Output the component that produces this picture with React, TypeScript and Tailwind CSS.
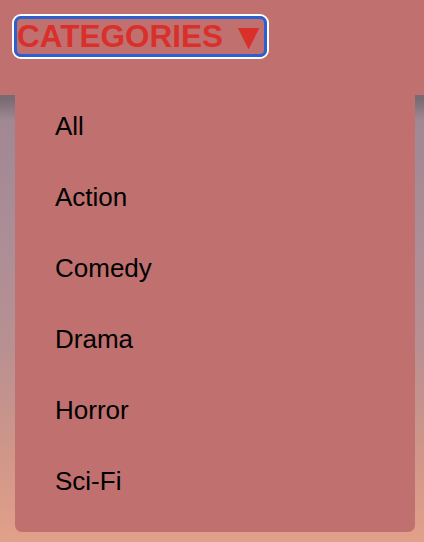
import { useState } from 'react'

const categories = ['All', 'Action', 'Comedy', 'Drama', 'Horror', 'Sci-Fi']

export default function App() {
  const [open, setOpen] = useState(true)
  const [selected, setSelected] = useState('All')

  return (
    <div
      className="relative min-h-screen h-[542px] overflow-hidden bg-[linear-gradient(180deg,#4d474e_0px,#7a6c76_100px,#a08893_120px,#ad8e97_250px,#b99091_350px,#cf9689_450px,#e1a089_542px)]"
      style={{ fontFamily: '"Liberation Sans", Arial, sans-serif' }}
    >
      <header className="h-[95px] bg-[#bf706f] pt-[14px] pl-[12px]">
        <button
          onClick={() => setOpen(!open)}
          className="flex items-center h-[45px] rounded-[9px] border-[2px] border-white bg-transparent"
        >
          <span className="flex items-center h-full rounded-[7px] border-[3px] border-[#2a60cf] pr-[5px] text-[31.5px] leading-none font-bold text-[#d9302b]">
            CATEGORIES
            <span className="ml-[15px] text-[28px] font-normal" style={{ fontFamily: '"DejaVu Sans", sans-serif' }}>
              ▼
            </span>
          </span>
        </button>
      </header>

      {open && (
        <ul className="absolute left-[15px] top-[91px] w-[400px] rounded-b-[7px] bg-[#bf706f] pb-[15px]">
          {categories.map((cat) => (
            <li
              key={cat}
              onClick={() => setSelected(cat)}
              className={
                'h-[71px] flex items-center pl-[40px] text-[26px] text-black cursor-pointer ' +
                (selected === cat ? '' : '')
              }
            >
              {cat}
            </li>
          ))}
        </ul>
      )}
    </div>
  )
}
